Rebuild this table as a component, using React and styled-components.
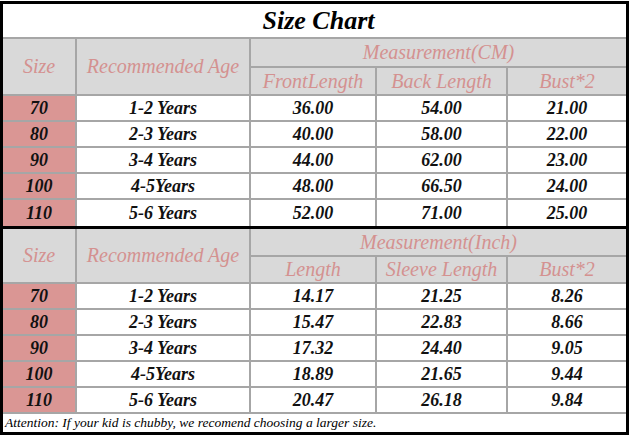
import React from "react";
import styled, { createGlobalStyle } from "styled-components";

const Global = createGlobalStyle`
  html, body { margin: 0; padding: 0; background: #ffffff; }
  body { font-family: "Liberation Serif", "Times New Roman", serif; }
`;

const LINE = "#a6a6a6";
const HEAD_BG = "#d9d9d9";
const PINK = "#da9694";
const HEAD_TEXT = "#d49190";

const Frame = styled.div`
  box-sizing: border-box;
  width: 629px;
  margin-top: 1px;
  border: 3px solid #000;
  background: #fff;
  display: flex;
  flex-direction: column;
`;

const Title = styled.div`
  height: 33px;
  border-bottom: 2px solid ${LINE};
  display: flex;
  align-items: center;
  justify-content: center;
  padding-left: 8px;
  font-family: "Liberation Serif", serif;
  font-style: italic;
  font-weight: bold;
  font-size: 26px;
  color: #000;
`;

const Section = styled.div`
  display: grid;
  grid-template-columns: 72px 172px 124px 129px 118px;
  grid-template-rows: ${(p) => p.$rows};
  gap: 2px;
  background: ${LINE};
  border-top: ${(p) => (p.$divided ? "3px solid #000" : "none")};
`;

const HeadCell = styled.div`
  background: ${HEAD_BG};
  grid-row: ${(p) => p.$row || "auto"};
  grid-column: ${(p) => p.$col || "auto"};
  display: flex;
  align-items: center;
  justify-content: center;
  font-family: "Liberation Serif", serif;
  font-style: italic;
  font-size: 20px;
  color: ${HEAD_TEXT};
  white-space: nowrap;
`;

const Cell = styled.div`
  background: ${(p) => (p.$size ? PINK : "#fff")};
  display: flex;
  align-items: center;
  justify-content: center;
  font-family: "Liberation Serif", serif;
  font-style: italic;
  font-weight: bold;
  font-size: 18px;
  color: #111;
  white-space: nowrap;
  padding-top: 1px;
`;

const Note = styled.div`
  grid-column: 1 / -1;
  background: #fff;
  display: flex;
  align-items: center;
  padding-left: 2px;
  font-family: "Liberation Serif", serif;
  font-style: italic;
  font-size: 13.5px;
  color: #000;
  white-space: nowrap;
`;

const cmRows = [
  ["70", "1-2 Years", "36.00", "54.00", "21.00"],
  ["80", "2-3 Years", "40.00", "58.00", "22.00"],
  ["90", "3-4 Years", "44.00", "62.00", "23.00"],
  ["100", "4-5Years", "48.00", "66.50", "24.00"],
  ["110", "5-6 Years", "52.00", "71.00", "25.00"],
];

const inchRows = [
  ["70", "1-2 Years", "14.17", "21.25", "8.26"],
  ["80", "2-3 Years", "15.47", "22.83", "8.66"],
  ["90", "3-4 Years", "17.32", "24.40", "9.05"],
  ["100", "4-5Years", "18.89", "21.65", "9.44"],
  ["110", "5-6 Years", "20.47", "26.18", "9.84"],
];

function Head({ unit, sub }) {
  return (
    <>
      <HeadCell $row="1 / 3" $col="1">Size</HeadCell>
      <HeadCell $row="1 / 3" $col="2">Recommended Age</HeadCell>
      <HeadCell $row="1" $col="3 / 6">{`Measurement(${unit})`}</HeadCell>
      {sub.map((s) => (
        <HeadCell key={s} $row="2">{s}</HeadCell>
      ))}
    </>
  );
}

function Rows({ data }) {
  return data.map((r) => (
    <React.Fragment key={r[0]}>
      <Cell $size>{r[0]}</Cell>
      <Cell>{r[1]}</Cell>
      <Cell>{r[2]}</Cell>
      <Cell>{r[3]}</Cell>
      <Cell>{r[4]}</Cell>
    </React.Fragment>
  ));
}

export default function App() {
  return (
    <>
      <Global />
      <Frame>
        <Title>Size Chart</Title>
        <Section $rows="27px 26px repeat(4, 24px) 26px">
          <Head unit="CM" sub={["FrontLength", "Back Length", "Bust*2"]} />
          <Rows data={cmRows} />
        </Section>
        <Section $divided $rows="26px 25px repeat(5, 24px) 18px">
          <Head unit="Inch" sub={["Length", "Sleeve Length", "Bust*2"]} />
          <Rows data={inchRows} />
          <Note>Attention: If your kid is chubby, we recomend choosing a larger size.</Note>
        </Section>
      </Frame>
    </>
  );
}
